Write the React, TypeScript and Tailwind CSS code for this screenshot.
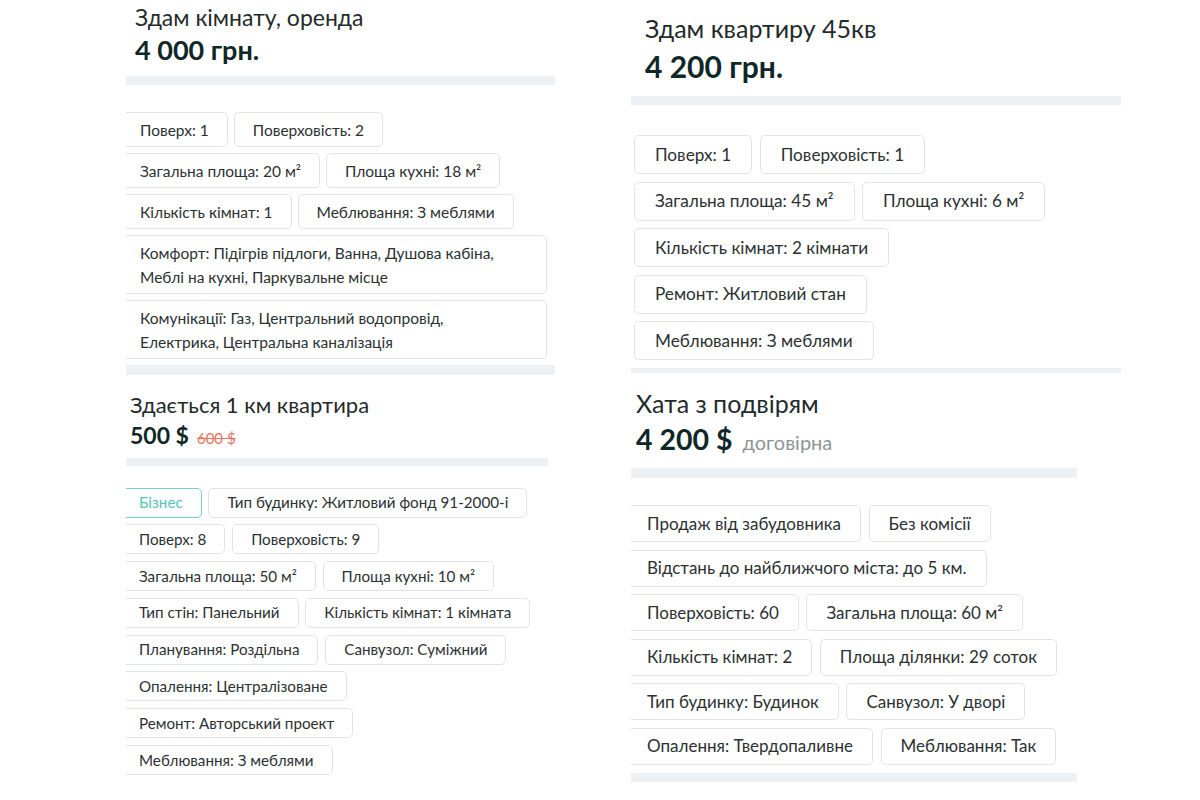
function Chip({ label, size, teal = false }: { label: string; size: string; teal?: boolean }) {
  const wide = label.includes("\n");
  return (
    <div
      className={`flex items-center whitespace-pre-line rounded-[5px] border bg-white ${size} ${
        wide ? "flex-1" : ""
      } ${teal ? "border-[#6fd3ca] text-[#55c4ba]" : "border-[#e1e4e7] text-[#2b3131]"}`}
    >
      {label}
    </div>
  );
}

type RowsProps = {
  rows: string[][];
  chip: string;
  gap: string;
  shift: string;
};

function Rows({ rows, chip, gap, shift }: RowsProps) {
  return (
    <div className={`flex flex-col ${gap} ${shift}`}>
      {rows.map((row, i) => (
        <div key={i} className={`flex items-start ${gap}`}>
          {row.map((label) => (
            <Chip key={label} label={label} size={chip} teal={label === "Бізнес"} />
          ))}
        </div>
      ))}
    </div>
  );
}

export default function App() {
  return (
    <div
      className="flex h-[800px] w-[1200px] overflow-hidden bg-white text-[#1f2b2b]"
      style={{ fontFamily: "Lato, 'Noto Sans', sans-serif" }}
    >
      {/* left column */}
      <div className="ml-[126px] w-[430px] overflow-hidden">
        {/* card 1 */}
        <div className="pt-[3px]">
          <div className="pl-[9px] text-[23px] leading-[28px]">Здам кімнату, оренда</div>
          <div className="mt-[4px] pl-[9px] text-[27px] font-bold leading-[30px] text-[#0f2727]">4 000 грн.</div>
          <div className="mt-[11px] h-[9px] w-[429px] bg-[#eef1f3]" />
          <div className="mt-[27px] w-[431px]">
            <Rows
              chip="min-h-[35px] px-[18px] py-[4.5px] text-[15.5px] leading-[24px]"
              gap="gap-[6px]"
              shift="-ml-[5px] w-[426px]"
              rows={[
                ["Поверх: 1", "Поверховість: 2"],
                ["Загальна площа: 20 м²", "Площа кухні: 18 м²"],
                ["Кількість кімнат: 1", "Меблювання: З меблями"],
                ["Комфорт: Підігрів підлоги, Ванна, Душова кабіна,\nМеблі на кухні, Паркувальне місце"],
                ["Комунікації: Газ, Центральний водопровід,\nЕлектрика, Центральна каналізація"],
              ]}
            />
          </div>
          <div className="mt-[6px] h-[10px] w-[429px] bg-[#eef1f3]" />
        </div>

        {/* card 3 */}
        <div className="pt-[16px]">
          <div className="pl-[4px] text-[22px] leading-[28px]">Здається 1 км квартира</div>
          <div className="mt-[2px] flex items-baseline gap-[8px] pl-[4px]">
            <span className="text-[23px] font-bold leading-[28px] text-[#0f2727]">500 $</span>
            <span className="text-[15px] text-[#e9735f] line-through">600 $</span>
          </div>
          <div className="mt-[8px] h-[8px] w-[422px] bg-[#eef1f3]" />
          <div className="mt-[22px]">
            <Rows
              chip="h-[30px] px-[18px] text-[15.2px]"
              gap="gap-[6.8px]"
              shift="-ml-[6px]"
              rows={[
                ["Бізнес", "Тип будинку: Житловий фонд 91-2000-і"],
                ["Поверх: 8", "Поверховість: 9"],
                ["Загальна площа: 50 м²", "Площа кухні: 10 м²"],
                ["Тип стін: Панельний", "Кількість кімнат: 1 кімната"],
                ["Планування: Роздільна", "Санвузол: Суміжний"],
                ["Опалення: Централізоване"],
                ["Ремонт: Авторський проект"],
                ["Меблювання: З меблями"],
              ]}
            />
          </div>
        </div>
      </div>

      {/* right column */}
      <div className="ml-[75px] w-[491px] overflow-hidden">
        {/* card 2 */}
        <div className="pt-[12px]">
          <div className="pl-[14px] text-[25px] leading-[32px]">Здам квартиру 45кв</div>
          <div className="mt-[5px] pl-[14px] text-[30px] font-bold leading-[35px] text-[#0f2727]">4 200 грн.</div>
          <div className="mt-[12px] h-[9px] w-[490px] bg-[#eef1f3]" />
          <div className="mt-[30px] pl-[3px]">
            <Rows
              chip="h-[39px] px-[20px] text-[17.2px]"
              gap="gap-[7.5px]"
              shift=""
              rows={[
                ["Поверх: 1", "Поверховість: 1"],
                ["Загальна площа: 45 м²", "Площа кухні: 6 м²"],
                ["Кількість кімнат: 2 кімнати"],
                ["Ремонт: Житловий стан"],
                ["Меблювання: З меблями"],
              ]}
            />
          </div>
          <div className="mt-[8px] h-[5px] w-[490px] bg-[#eef1f3]" />
        </div>

        {/* card 4 */}
        <div className="pt-[14px]">
          <div className="pl-[5px] text-[25px] leading-[32px]">Хата з подвірям</div>
          <div className="mt-[4px] flex items-baseline gap-[10px] pl-[5px]">
            <span className="text-[28.5px] font-bold leading-[32px] text-[#0f2727]">4 200 $</span>
            <span className="text-[20px] text-[#8c9595]">договірна</span>
          </div>
          <div className="mt-[11px] h-[10px] w-[446px] bg-[#eef1f3]" />
          <div className="mt-[27px]">
            <Rows
              chip="h-[37px] px-[19px] text-[17px]"
              gap="gap-[7.5px]"
              shift="-ml-[4px]"
              rows={[
                ["Продаж від забудовника", "Без комісії"],
                ["Відстань до найближчого міста: до 5 км."],
                ["Поверховість: 60", "Загальна площа: 60 м²"],
                ["Кількість кімнат: 2", "Площа ділянки: 29 соток"],
                ["Тип будинку: Будинок", "Санвузол: У дворі"],
                ["Опалення: Твердопаливне", "Меблювання: Так"],
              ]}
            />
          </div>
          <div className="mt-[8px] h-[9px] w-[446px] bg-[#eef1f3]" />
        </div>
      </div>
    </div>
  );
}
